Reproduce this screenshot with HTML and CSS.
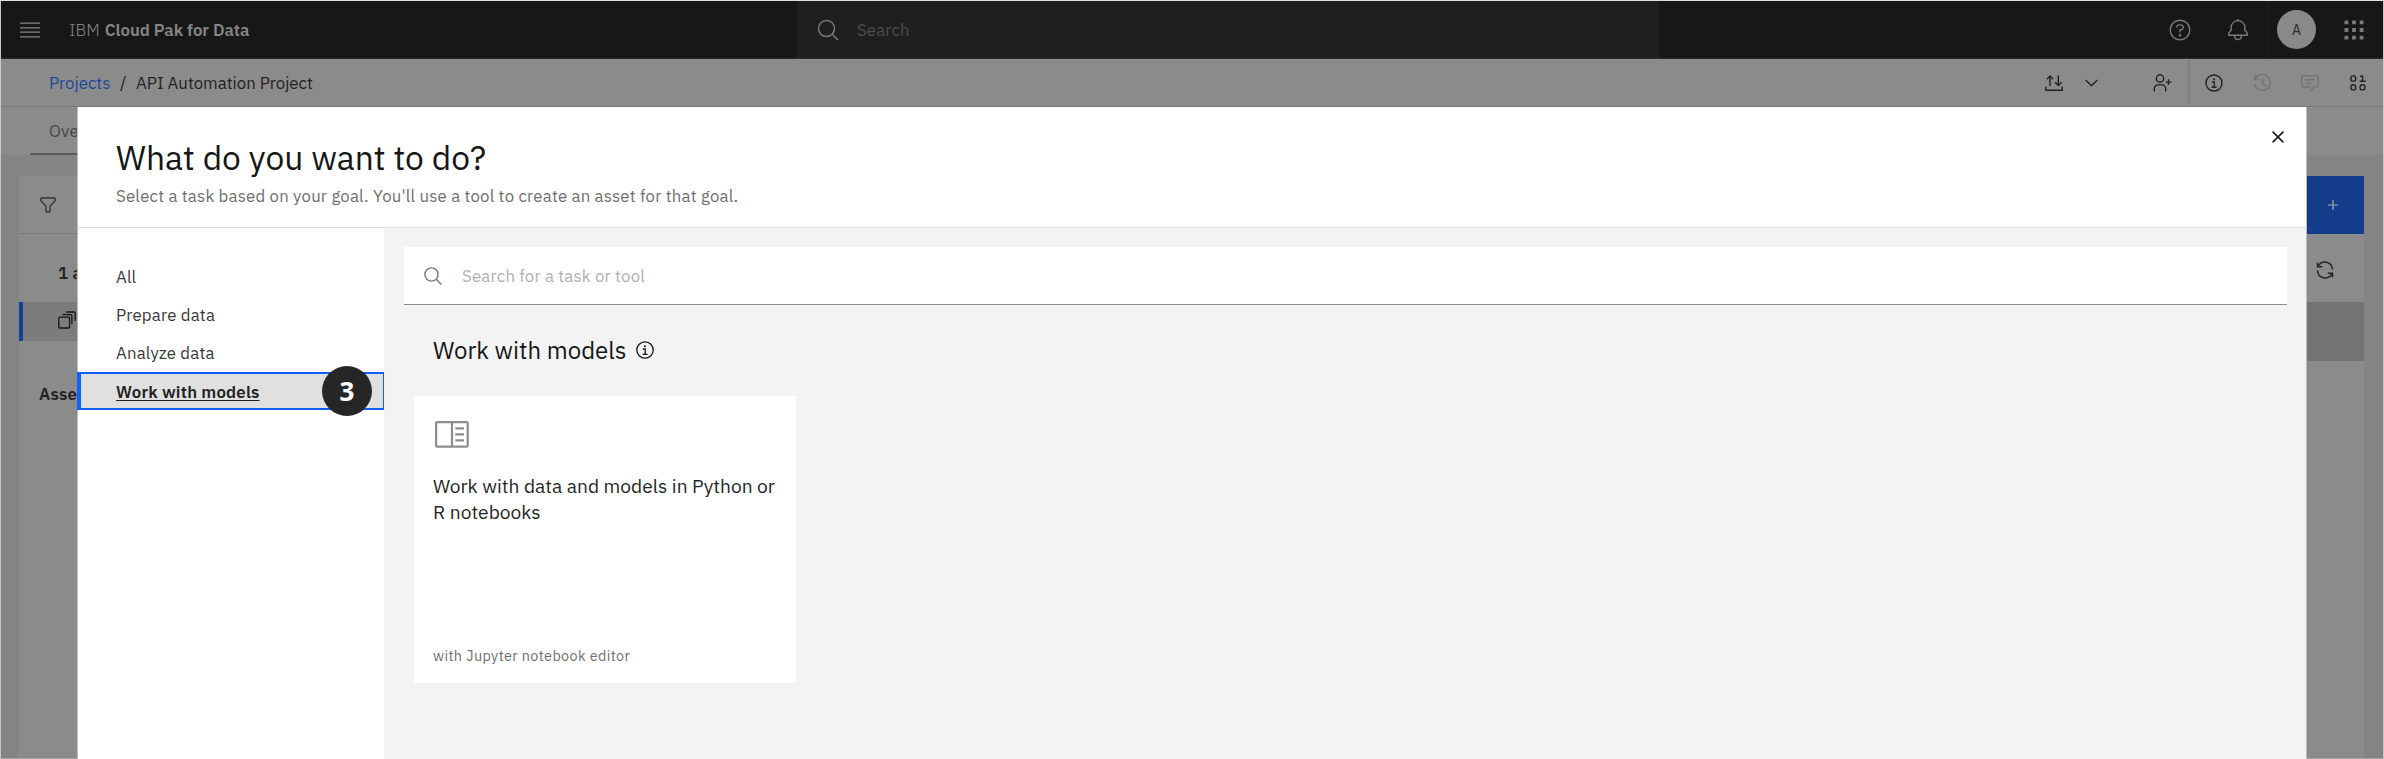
FILE: index.html
```html
<!DOCTYPE html>
<html lang="en">
<head>
<meta charset="utf-8">
<title>IBM Cloud Pak for Data</title>
<link rel="stylesheet" href="styles.css">
</head>
<body>
<div class="app">
  <header class="header">
    <div class="menu"><svg width="20" height="16" viewBox="0 0 20 16" fill="none" stroke="currentColor" stroke-width="1.3"><path d="M0 1.2h20M0 5.8h20M0 10.2h20M0 14.8h20"/></svg></div>
    <div class="brand"><span class="brand-ibm">IBM</span><b>Cloud Pak for Data</b></div>
    <div class="global-search">
      <svg width="22" height="22" viewBox="0 0 22 22" fill="none" stroke="currentColor" stroke-width="1.5"><circle cx="9.5" cy="9.5" r="8"/><path d="M15.2 15.2l5.8 5.8"/></svg>
      <span>Search</span>
    </div>
    <div class="header-actions">
      <div class="cell"><svg width="22" height="22" viewBox="0 0 22 22" fill="none" stroke="currentColor" stroke-width="1.4"><circle cx="11" cy="11" r="9.8"/><path d="M7.8 8.6V8.2a2.3 2.3 0 0 1 2.3-2.3h1.7a2.4 2.4 0 0 1 0 4.9H11v2.7"/><circle cx="11" cy="16.2" r="1.2" fill="currentColor" stroke="none"/></svg></div>
      <div class="cell"><svg width="22" height="22" viewBox="0 0 22 22" fill="none" stroke="currentColor" stroke-width="1.4"><path d="M11 0v1.6M1.8 16.3v-2.4l2.3-2.7V8.5a6.9 6.9 0 0 1 13.8 0v2.7l2.3 2.7v2.4zM7.7 16.5v.8a3.3 3.3 0 0 0 6.6 0v-.8"/></svg></div>
      <div class="cell cell-user"><span class="avatar">A</span></div>
      <div class="cell"><svg width="20" height="20" viewBox="0 0 20 20" fill="currentColor"><path d="M.5.5h3.8v3.8H.5zM8.1.5h3.8v3.8H8.1zM15.7.5h3.8v3.8h-3.8zM.5 8.1h3.8v3.8H.5zM8.1 8.1h3.8v3.8H8.1zM15.7 8.1h3.8v3.8h-3.8zM.5 15.7h3.8v3.8H.5zM8.1 15.7h3.8v3.8H8.1zM15.7 15.7h3.8v3.8h-3.8z"/></svg></div>
    </div>
  </header>

  <div class="toolbar">
    <nav class="breadcrumb"><a>Projects</a><span class="slash">/</span><span class="current">API Automation Project</span></nav>
    <div class="tools">
      <svg class="transfer" width="18" height="18" viewBox="0 0 18 18" fill="none" stroke="currentColor" stroke-width="1.4"><path d="M5 12V2M1.8 5.2L5 2l3.2 3.2M13.3 1.5v10M10.1 8.3l3.2 3.2 3.2-3.2M.8 12.5v3.7h16.4v-3.7"/></svg>
      <svg class="chevron" width="13" height="8" viewBox="0 0 13 8" fill="none" stroke="currentColor" stroke-width="1.4"><path d="M.7 1l5.8 5.7L12.3 1"/></svg>
      <svg class="add-user" width="19" height="18" viewBox="0 0 19 18" fill="none" stroke="currentColor" stroke-width="1.4"><circle cx="7" cy="4.5" r="3.7"/><path d="M1.3 17.5v-2.8a3.8 3.8 0 0 1 3.8-3.8h3.8a3.8 3.8 0 0 1 3.8 3.8v2.8M15.5 5.3v5.6M12.7 8.1h5.6"/></svg>
      <div class="panel-tools">
        <div class="tool"><svg width="18" height="18" viewBox="0 0 18 18" fill="none" stroke="currentColor" stroke-width="1.4"><circle cx="9" cy="9" r="8"/><path d="M6.6 13.2h5M6.9 8h2.3v5.2"/><circle cx="9" cy="5.2" r="1" fill="currentColor" stroke="none"/></svg></div>
        <div class="tool muted"><svg width="18" height="18" viewBox="0 0 18 18" fill="none" stroke="currentColor" stroke-width="1.4"><path d="M2 5.2A8 8 0 1 1 1.5 10M1.7.8v4.6h4.7M9.6 4.3v5l3.6 3.6"/></svg></div>
        <div class="tool muted"><svg width="18" height="18" viewBox="0 0 18 18" fill="none" stroke="currentColor" stroke-width="1.4"><path d="M9.7 17.2l3-4.2h3a1.5 1.5 0 0 0 1.5-1.5V3.3a1.5 1.5 0 0 0-1.5-1.5H2.3A1.5 1.5 0 0 0 .8 3.3v8.200A1.5 1.5 0 0 0 2.3 13H9M4.500 5.700h9M4.500 9.200h6"/></svg></div>
        <div class="tool"><svg width="18" height="18" viewBox="0 0 18 18" fill="none" stroke="currentColor" stroke-width="1.4"><rect x="1.9" y="1.9" width="4.8" height="5.2" rx="2.2"/><rect x="1.9" y="10.7" width="4.8" height="5.2" rx="2.2"/><rect x="11.1" y="10.7" width="4.8" height="5.2" rx="2.2"/><path d="M11 2.2h2.6v5M10.600 7.200h6"/></svg></div>
      </div>
    </div>
  </div>

  <div class="tabs"><span class="tab">Ove</span></div>

  <main class="page">
    <section class="assets">
      <div class="assets-bar">
        <svg width="16" height="16" viewBox="0 0 16 16" fill="none" stroke="currentColor" stroke-width="1.4"><path d="M1.5 1h13a.6.6 0 0 1 .6.6v2.2L10 9.3v4.900a.8.8 0 0 1-.8.8H6.800a.8.8 0 0 1-.8-.8V9.300L.9 3.800V1.600A.6.6 0 0 1 1.500 1z"/></svg>
        <div class="new-asset"><svg width="10" height="10" viewBox="0 0 10 10" stroke="currentColor" stroke-width="1.2"><path d="M5 0v10M0 5h10"/></svg></div>
      </div>
      <div class="asset-count"><b>1 a</b>
        <svg width="18" height="18" viewBox="0 0 18 18" fill="none" stroke="currentColor" stroke-width="1.4"><path d="M2 5.500A7.600 7.600 0 0 1 16.500 8.500M1.500 1.500v4.300h4.700M16 12.500A7.600 7.600 0 0 1 1.500 9.500M16.500 16.500v-4.300h-4.700"/></svg>
      </div>
      <div class="asset-row">
        <div class="asset-type"><svg width="18" height="18" viewBox="0 0 18 18" fill="none" stroke="currentColor" stroke-width="1.3"><rect x=".8" y="6.2" width="10.8" height="10.8" rx="1"/><path d="M4.500 3.700h8.400a1 1 0 0 1 1 1V13M8.200 1h8a1 1 0 0 1 1 1v8"/></svg></div>
        <div class="asset-line"></div>
      </div>
      <b class="asset-heading">Asse</b>
    </section>
  </main>

  <div class="modal">
    <div class="modal-header">
      <div>
        <h1>What do you want to do?</h1>
        <p>Select a task based on your goal. You'll use a tool to create an asset for that goal.</p>
      </div>
      <svg class="close" width="12" height="12" viewBox="0 0 12 12" stroke="currentColor" stroke-width="1.5"><path d="M.6.6l10.800 10.800M11.400.6L.6 11.400"/></svg>
    </div>
    <div class="modal-body">
      <nav class="side">
        <a>All</a>
        <a>Prepare data</a>
        <a>Analyze data</a>
        <a class="selected"><span>Work with models</span><i class="step">3</i></a>
      </nav>
      <div class="content">
        <div class="task-search">
          <svg width="18" height="18" viewBox="0 0 18 18" fill="none" stroke="currentColor" stroke-width="1.4"><circle cx="7.5" cy="7.5" r="6.6"/><path d="M12.200 12.200l5.200 5.200"/></svg>
          <span>Search for a task or tool</span>
        </div>
        <h2><span>Work with models</span><svg width="18" height="18" viewBox="0 0 18 18" fill="none" stroke="currentColor" stroke-width="1.3"><circle cx="9" cy="9" r="8.2"/><path d="M6.600 13.300h5M6.900 8h2.300v5.300"/><circle cx="9" cy="5.2" r="1" fill="currentColor" stroke="none"/></svg></h2>
        <div class="card">
          <svg width="34" height="27" viewBox="0 0 34 27" fill="none" stroke="currentColor" stroke-width="2.2"><rect x="1.1" y="1.1" width="31.6" height="24.6" rx="1"/><path d="M17 1v25M20.300 7.300H29M20.300 13.300H29M20.300 19.300H29"/></svg>
          <h3>Work with data and models in Python or<br>R notebooks</h3>
          <p>with Jupyter notebook editor</p>
        </div>
      </div>
    </div>
  </div>
</div>
</body>
</html>
```
FILE: styles.css
```css
* { box-sizing: border-box; margin: 0; }
body { font-family: "IBM Plex Sans", Roboto, "Liberation Sans", sans-serif; font-size: 16.8px; color: #161616; overflow: hidden; }
svg { display: block; flex: none; }
.app { position: relative; width: 2384px; height: 759px; border: 1px solid #c6c7c6; border-top-color: #dfe3e2; border-bottom-color: #a5a5a5; display: flex; flex-direction: column; background: #848484; white-space: nowrap; }

.header { height: 58px; flex: none; display: flex; align-items: center; background: #171717; border-bottom: 1px solid #2b2b2b; color: #7a7a7a; }
.menu { width: 68px; padding-left: 19px; color: #858585; }
.brand { width: 728px; display: flex; gap: 5px; padding-top: 1px; color: #858585; }
.brand-ibm { font-weight: 300; }
.brand b { font-weight: 600; }
.global-search { width: 862px; height: 57px; display: flex; align-items: center; gap: 18px; padding-left: 20px; background: #1f1f1f; }
.global-search span { color: #4c4c4c; padding-top: 1px; letter-spacing: 0.1px; }
.header-actions { margin-left: auto; height: 57px; display: flex; }
.cell { width: 58px; display: flex; align-items: center; justify-content: center; }
.cell-user { border-left: 1px solid #222; }
.avatar { width: 39px; height: 39px; border-radius: 50%; background: #898989; color: #2b2b2b; font-size: 14px; line-height: 41px; text-align: center; }

.toolbar { height: 48px; flex: none; display: flex; align-items: center; justify-content: space-between; background: #8b8b8b; border-bottom: 1px solid #7b7b7b; padding-left: 48px; }
.breadcrumb { display: flex; padding-top: 1px; color: #222; }
.breadcrumb a { width: 71px; color: #1b479c; }
.slash { width: 16px; }
.tools { display: flex; align-items: center; height: 47px; color: #222; }
.chevron { margin-left: 22px; }
.add-user { margin-left: 55px; }
.panel-tools { display: flex; height: 47px; margin-left: 16px; margin-right: 1px; border-left: 2px solid #808080; }
.tool { width: 48px; display: flex; align-items: center; justify-content: center; }
.muted { color: #747474; }

.tabs { height: 48px; flex: none; background: #8b8b8b; padding-left: 29px; }
.tab { display: block; width: 120px; height: 48px; padding: 13px 19px 0; border-bottom: 2px solid #5b5b5b; color: #484848; letter-spacing: 0.19px; }

.page { flex: 1; padding: 21px 19px 0 18px; }
.assets { height: 100%; background: #8b8b8b; letter-spacing: 0.19px; }
.assets b { font-weight: 600; }
.assets-bar { height: 58px; display: flex; align-items: center; justify-content: space-between; border-bottom: 1px solid #7b7b7b; padding-left: 21px; color: #333; }
.new-asset { width: 62px; height: 58px; display: flex; align-items: center; justify-content: center; background: #133c8b; color: #aaa; }
.asset-count { height: 68px; display: flex; align-items: center; justify-content: space-between; padding: 5px 30px 0 39px; color: #222; }
.asset-count b { padding-top: 4px; }
.asset-count svg { margin-top: -2px; }
.asset-row { height: 59px; display: flex; align-items: flex-start; }
.asset-type { width: 300px; height: 39px; display: flex; align-items: center; background: #7c7c7c; border-left: 4px solid #133fa0; padding: 0 0 3px 35px; }
.asset-line { flex: 1; height: 59px; background: #737373; }
.asset-heading { display: block; padding: 22px 20px 0; color: #222; }

.modal { position: absolute; left: 77px; top: 106px; width: 2228px; height: 652px; background: #fff; display: flex; flex-direction: column; box-shadow: 0 0 0 1px #bcbcbc; clip-path: inset(0 -1px 0 -1px); }
.modal-header { height: 121px; flex: none; display: flex; justify-content: space-between; border-bottom: 1px solid #e0e0e0; padding: 24px 22px 0 38px; }
h1 { font-size: 33.6px; line-height: 54px; font-weight: 400; }
.modal-header p { line-height: 20px; padding-top: 1px; color: #6f6f6f; letter-spacing: 0.2px; }
.modal-body { flex: 1; display: flex; }
.side { width: 306px; padding-top: 30px; color: #393939; letter-spacing: 0.19px; }
.side a { display: flex; align-items: center; height: 38px; padding-left: 38px; }
.side .selected { width: 308px; height: 38px; margin-left: -1px; border: 2px solid #0f62fe; border-left-width: 4px; background: #e0e0e0; padding: 0 11px 0 35px; justify-content: space-between; font-weight: 600; text-decoration: underline; text-underline-offset: 2px; color: #222; }
.selected span { padding-top: 1px; }
.step { flex: none; width: 50px; height: 50px; border-radius: 50%; background: #262626; color: #fff; font: 700 26px/50px "Open Sans", sans-serif; text-align: center; }
.content { flex: 1; background: #f3f3f3; padding: 19px 19px 0 20px; }
.task-search { height: 58px; display: flex; align-items: center; gap: 20px; padding-left: 20px; background: #fff; border-bottom: 1px solid #8d8d8d; color: #777; letter-spacing: 0.19px; }
.task-search span { color: #b0b0b0; }
h2 { display: flex; align-items: center; gap: 10px; height: 91px; padding: 0 29px 1px; font-size: 24px; font-weight: 400; }
.card { width: 382px; height: 287px; margin-left: 10px; padding: 25px 19px 0; background: #fff; display: flex; flex-direction: column; }
.card svg { color: #8d8d8d; margin-left: 2px; }
h3 { font-size: 19.2px; line-height: 26px; font-weight: 400; padding-top: 25px; color: #262626; }
.card p { font-size: 14.4px; margin: auto 0 18px; color: #6f6f6f; letter-spacing: 0.38px; }
```
